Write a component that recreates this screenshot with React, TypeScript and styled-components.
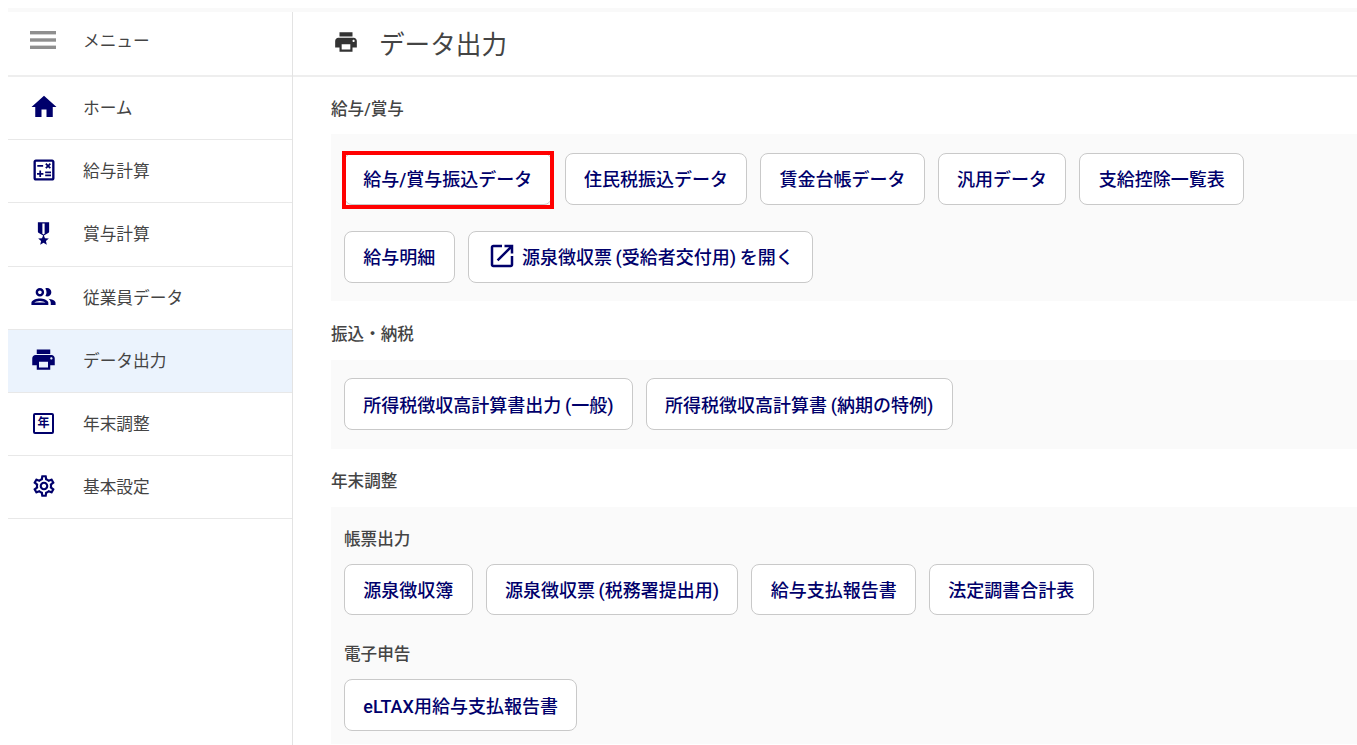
import React from "react";
import styled, { createGlobalStyle } from "styled-components";

const Global = createGlobalStyle`
  html, body { margin: 0; height: 745px; overflow: hidden; background: #fff; }
  body { font-family: Roboto, "Noto Sans CJK JP", "Noto Sans", sans-serif; color: #333; }
`;
const Page = styled.div`
  display: grid;
  grid-template-columns: 285px 1fr;
  height: 737px;
  margin: 8px 0 0 8px;
  border-top: 4px solid #f9f9f9;
  box-sizing: border-box;
  overflow: hidden;
`;
const Side = styled.nav`
  border-right: 1px solid #e3e3e3;
  display: flex;
  flex-direction: column;
  margin-top: -4px;
`;
const MenuHead = styled.div`
  height: 69px;
  flex: none;
  box-sizing: border-box;
  border-bottom: 2px solid #eee;
  display: flex;
  align-items: center;
  gap: 26px;
  padding-left: 22px;
  padding-bottom: 4px;
  font-size: 16.7px;
  color: #444;
`;
const NavRow = styled.div<{ $active?: boolean }>`
  height: 63.2px;
  flex: none;
  box-sizing: border-box;
  border-bottom: 1.5px solid #e8e8e8;
  background: ${(p) => (p.$active ? "#ebf3fd" : "transparent")};
  display: flex;
  align-items: center;
  gap: 26px;
  padding-left: 22px;
  padding-bottom: 2px;
  font-size: 16.7px;
  color: #444;
`;
const NavIcon = styled.svg<{ $size: number }>`
  width: ${(p) => p.$size}px;
  height: ${(p) => p.$size}px;
  margin: 0 ${(p) => (27 - p.$size) / 2}px;
  fill: #00006b;
  flex: none;
`;
const MenuBars = styled.svg`
  width: 26px;
  height: 18px;
  margin-right: 1px;
  fill: #8f8f8f;
  flex: none;
`;
const YearIconWrap = styled.span`
  width: 27px;
  height: 27px;
  flex: none;
  display: flex;
  align-items: center;
  justify-content: center;
`;
const YearIcon = styled.span`
  width: 21px;
  height: 21px;
  box-sizing: border-box;
  border: 2px solid #00006b;
  border-radius: 2px;
  font-size: 12px;
  font-weight: 700;
  line-height: 17px;
  text-align: center;
  color: #00006b;
`;
const Main = styled.main`
  min-width: 0;
  display: flex;
  flex-direction: column;
  margin-top: -4px;
`;
const Header = styled.header`
  height: 69px;
  box-sizing: border-box;
  border-bottom: 2px solid #eee;
  display: flex;
  align-items: center;
  gap: 20px;
  padding: 0 0 3px 40px;
  flex: none;
  border-top: 4px solid #f9f9f9;
`;
const HeaderIcon = styled.svg`
  width: 26px;
  height: 26px;
  fill: #333;
  flex: none;
`;
const Title = styled.h1`
  margin: 0;
  font-size: 25.6px;
  font-weight: 400;
  color: #444;
`;
const Content = styled.div`
  padding-left: 38px;
  display: flex;
  flex-direction: column;
`;
const SectionTitle = styled.h2<{ $height: number; $below?: number }>`
  margin: 0;
  height: ${(p) => p.$height}px;
  box-sizing: border-box;
  padding-bottom: ${(p) => p.$below ?? 13}px;
  display: flex;
  align-items: flex-end;
  font-size: 16.6px;
  line-height: 24px;
  font-weight: 500;
  color: #444;
`;
const Panel = styled.section<{ $pad: string }>`
  background: #fafafa;
  padding: ${(p) => p.$pad};
`;
const ButtonRow = styled.div`
  display: flex;
  flex-wrap: wrap;
  gap: 26.5px 13px;
`;
const SubTitle = styled.h3`
  margin: 0;
  height: 38px;
  font-size: 16.6px;
  line-height: 28px;
  font-weight: 500;
  color: #444;
`;
const SubGroup = styled.div`
  & + & { margin-top: 26px; }
`;
const Btn = styled.button<{ $marked?: boolean }>`
  position: relative;
  height: 51.5px;
  box-sizing: border-box;
  padding: 0 18.3px 1px;
  background: #fff;
  border: 1px solid #c9c9c9;
  border-radius: 8px;
  color: #00006b;
  font-family: inherit;
  font-size: 18px;
  font-weight: 500;
  word-spacing: -0.8px;
  display: flex;
  align-items: center;
  gap: 5px;
  white-space: nowrap;
  ${(p) =>
    p.$marked
      ? `&::after {
    content: "";
    position: absolute;
    inset: -3.5px -3.4px -5px -3px;
    border: 4px solid #f00;
    pointer-events: none;
  }`
      : ""}
`;
const ExtIcon = styled.svg`
  width: 30px;
  height: 30px;
  fill: #00006b;
  flex: none;
`;

const P = {
  home: "M10 20v-6h4v6h5v-8h3L12 3 2 12h3v8z",
  calc: "M19 3H5c-1.1 0-2 .9-2 2v14c0 1.1.9 2 2 2h14c1.1 0 2-.9 2-2V5c0-1.1-.9-2-2-2zm0 16H5V5h14v14zM6.25 7.72h5v1.5h-5zM13 15.75h5v1.5h-5zM13 13.25h5v1.5h-5zM8 18h1.5v-2h2v-1.5h-2v-2H8v2H6V16h2zM14.09 10.95l1.41-1.41 1.41 1.41 1.06-1.06-1.41-1.42 1.41-1.41L16.91 6 15.5 7.41 14.09 6l-1.06 1.06 1.41 1.41-1.41 1.42z",
  medal: "M17 10.43V2H7v8.43c0 .35.18.68.49.86l4.18 2.51-.99 2.34-3.41.29 2.59 2.24L9.07 22 12 20.23 14.93 22l-.78-3.33 2.59-2.24-3.41-.29-.99-2.34 4.18-2.51c.3-.18.48-.5.48-.86zm-4 1.8l-1 .6-1-.6V3h2v9.23z",
  people: "M9 13.75c-2.34 0-7 1.17-7 3.5V19h14v-1.75c0-2.33-4.66-3.5-7-3.5zM4.34 17c.84-.58 2.87-1.25 4.66-1.25s3.82.67 4.66 1.25H4.34zM9 12c1.93 0 3.5-1.57 3.5-3.5S10.93 5 9 5 5.5 6.57 5.5 8.5 7.07 12 9 12zm0-5c.83 0 1.5.67 1.5 1.5S9.83 10 9 10s-1.5-.67-1.5-1.5S8.17 7 9 7zm7.04 6.81c1.16.84 1.96 1.96 1.96 3.44V19h4v-1.75c0-2.02-3.5-3.17-5.96-3.44zM15 12c1.93 0 3.5-1.57 3.5-3.5S16.93 5 15 5c-.54 0-1.04.13-1.5.35.63.89 1 1.98 1 3.15s-.37 2.26-1 3.15c.46.22.96.35 1.5.35z",
  print: "M19 8H5c-1.66 0-3 1.34-3 3v6h4v4h12v-4h4v-6c0-1.66-1.34-3-3-3zm-3 11H8v-5h8v5zm3-7c-.55 0-1-.45-1-1s.45-1 1-1 1 .45 1 1-.45 1-1 1zm-1-9H6v4h12V3z",
  gear: "M19.43 12.98c.04-.32.07-.64.07-.98 0-.34-.03-.66-.07-.98l2.11-1.65c.19-.15.24-.42.12-.64l-2-3.46c-.09-.16-.26-.25-.44-.25-.06 0-.12.01-.17.03l-2.49 1c-.52-.4-1.08-.73-1.69-.98l-.38-2.65C14.46 2.18 14.25 2 14 2h-4c-.25 0-.46.18-.49.42l-.38 2.65c-.61.25-1.17.59-1.69.98l-2.49-1c-.06-.02-.12-.03-.18-.03-.17 0-.34.09-.43.25l-2 3.46c-.13.22-.07.49.12.64l2.11 1.65c-.04.32-.07.65-.07.98 0 .33.03.66.07.98l-2.11 1.65c-.19.15-.24.42-.12.64l2 3.46c.09.16.26.25.44.25.06 0 .12-.01.17-.03l2.49-1c.52.4 1.08.73 1.69.98l.38 2.65c.03.24.24.42.49.42h4c.25 0 .46-.18.49-.42l.38-2.65c.61-.25 1.17-.59 1.69-.98l2.49 1c.06.02.12.03.18.03.17 0 .34-.09.43-.25l2-3.46c.12-.22.07-.49-.12-.64l-2.11-1.65zm-1.98-1.71c.04.31.05.52.05.73 0 .21-.02.43-.05.73l-.14 1.13.89.7 1.08.84-.7 1.21-1.27-.51-1.04-.42-.9.68c-.43.32-.84.56-1.25.73l-1.06.43-.16 1.13-.2 1.35h-1.4l-.19-1.35-.16-1.13-1.06-.43c-.43-.18-.83-.41-1.23-.71l-.91-.7-1.06.43-1.27.51-.7-1.21 1.08-.84.89-.7-.14-1.13c-.03-.31-.05-.54-.05-.74s.02-.43.05-.73l.14-1.13-.89-.7-1.08-.84.7-1.21 1.27.51 1.04.42.9-.68c.43-.32.84-.56 1.25-.73l1.06-.43.16-1.13.2-1.35h1.39l.19 1.35.16 1.13 1.06.43c.43.18.83.41 1.23.71l.91.7 1.06-.43 1.27-.51.7 1.21-1.07.85-.89.7.14 1.13zM12 8c-2.21 0-4 1.79-4 4s1.79 4 4 4 4-1.79 4-4-1.79-4-4-4zm0 6c-1.1 0-2-.9-2-2s.9-2 2-2 2 .9 2 2-.9 2-2 2z",
  ext: "M19 19H5V5h7V3H5c-1.11 0-2 .9-2 2v14c0 1.1.89 2 2 2h14c1.1 0 2-.9 2-2v-7h-2v7zM14 3v2h3.59l-9.83 9.83 1.41 1.41L19 6.41V10h2V3h-7z",
};

const Icon = ({ d, size = 27 }: { d: string; size?: number }) => (
  <NavIcon $size={size} viewBox="0 0 24 24"><path d={d} /></NavIcon>
);

export default function App() {
  return (
    <>
      <Global />
      <Page>
        <Side>
          <MenuHead>
            <MenuBars viewBox="0 0 26 18">
              <rect y="0" width="26" height="3.4" />
              <rect y="7.3" width="26" height="3.4" />
              <rect y="14.6" width="26" height="3.4" />
            </MenuBars>
            メニュー
          </MenuHead>
          <NavRow><Icon d={P.home} size={30} />ホーム</NavRow>
          <NavRow><Icon d={P.calc} size={28} />給与計算</NavRow>
          <NavRow><Icon d={P.medal} size={27} />賞与計算</NavRow>
          <NavRow><Icon d={P.people} size={29} />従業員データ</NavRow>
          <NavRow $active><Icon d={P.print} />データ出力</NavRow>
          <NavRow><YearIconWrap><YearIcon>年</YearIcon></YearIconWrap>年末調整</NavRow>
          <NavRow><Icon d={P.gear} size={26} />基本設定</NavRow>
        </Side>
        <Main>
          <Header>
            <HeaderIcon viewBox="0 0 24 24"><path d={P.print} /></HeaderIcon>
            <Title>データ出力</Title>
          </Header>
          <Content>
            <SectionTitle $height={57} $below={12}>給与/賞与</SectionTitle>
            <Panel $pad="19px 13px 18.4px">
              <ButtonRow>
                <Btn $marked>給与/賞与振込データ</Btn>
                <Btn>住民税振込データ</Btn>
                <Btn>賃金台帳データ</Btn>
                <Btn>汎用データ</Btn>
                <Btn>支給控除一覧表</Btn>
                <Btn>給与明細</Btn>
                <Btn>
                  <ExtIcon viewBox="0 0 24 24"><path d={P.ext} /></ExtIcon>
                  源泉徴収票 (受給者交付用) を開く
                </Btn>
              </ButtonRow>
            </Panel>
            <SectionTitle $height={59}>振込・納税</SectionTitle>
            <Panel $pad="18.4px 13px 19px">
              <ButtonRow>
                <Btn>所得税徴収高計算書出力 (一般)</Btn>
                <Btn>所得税徴収高計算書 (納期の特例)</Btn>
              </ButtonRow>
            </Panel>
            <SectionTitle $height={58}>年末調整</SectionTitle>
            <Panel $pad="19px 13px 13px">
              <SubGroup>
                <SubTitle>帳票出力</SubTitle>
                <ButtonRow>
                  <Btn>源泉徴収簿</Btn>
                  <Btn>源泉徴収票 (税務署提出用)</Btn>
                  <Btn>給与支払報告書</Btn>
                  <Btn>法定調書合計表</Btn>
                </ButtonRow>
              </SubGroup>
              <SubGroup>
                <SubTitle>電子申告</SubTitle>
                <ButtonRow>
                  <Btn>eLTAX用給与支払報告書</Btn>
                </ButtonRow>
              </SubGroup>
            </Panel>
          </Content>
        </Main>
      </Page>
    </>
  );
}
